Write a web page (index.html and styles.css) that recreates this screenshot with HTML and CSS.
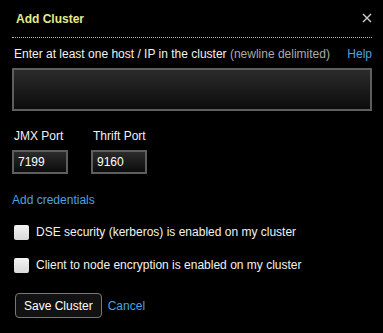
FILE: index.html
```html
<!DOCTYPE html>
<html>
<head>
    <meta charset="utf-8">
    <title>Add Cluster</title>
    <link rel="stylesheet" href="styles.css">
</head>
<body>
    <div class="dialog">
        <div class="header">
            <h1>Add Cluster</h1>
            <svg class="close" width="10" height="10" viewBox="0 0 10 10">
                <path d="M1 1L9 9M9 1L1 9" stroke="#cfcfcf" stroke-width="1.4" fill="none"/>
            </svg>
        </div>
        <div class="hosts-label">
            <span>Enter at least one host / IP in the cluster <span class="muted">(newline delimited)</span></span>
            <a href="#" class="link">Help</a>
        </div>
        <textarea class="hosts"></textarea>
        <div class="ports">
            <div class="port">
                <label>JMX Port</label>
                <input type="text" value="7199">
            </div>
            <div class="port">
                <label>Thrift Port</label>
                <input type="text" value="9160">
            </div>
        </div>
        <a href="#" class="link credentials">Add credentials</a>
        <label class="check"><span class="box"></span>DSE security (kerberos) is enabled on my cluster</label>
        <label class="check"><span class="box"></span>Client to node encryption is enabled on my cluster</label>
        <div class="actions">
            <button>Save Cluster</button>
            <a href="#" class="link">Cancel</a>
        </div>
    </div>
</body>
</html>
```

FILE: styles.css
```css
body {
    margin: 0;
    background-color: #000;
    color: #f2f2f2;
    font-family: "Liberation Sans", Arial, sans-serif;
    font-size: 12px;
}

.dialog {
    padding: 0 11px 0 12px;
}

.header {
    display: flex;
    justify-content: space-between;
    align-items: flex-start;
    height: 37px;
    border-bottom: 1px dotted #bbb;
}

.header h1 {
    margin: 12px 0 0 4px;
    font-size: 12px;
    color: #e4ec8a;
}

.close {
    margin: 13px 0 0 0;
}

.link {
    color: #4ba3e0;
    text-decoration: none;
}

.muted {
    color: #aaa;
}

.hosts-label {
    display: flex;
    justify-content: space-between;
    margin: 9px 0 0 2px;
    line-height: 15px;
}

.hosts {
    display: block;
    box-sizing: border-box;
    width: 100%;
    height: 43px;
    margin-top: 6px;
    background: linear-gradient(#2b2b2b, #0c0c0c);
    border: 2px solid #5e5e5e;
    resize: none;
}

.ports {
    display: flex;
    gap: 23px;
    margin-top: 18px;
}

.port label {
    display: block;
    margin-left: 2px;
    line-height: 15px;
}

.port input {
    box-sizing: border-box;
    width: 56px;
    height: 24px;
    margin-top: 6px;
    padding: 0 4px;
    background: linear-gradient(#2b2b2b, #0c0c0c);
    border: 2px solid #5e5e5e;
    color: #fff;
    font-family: inherit;
    font-size: 12px;
}

.credentials {
    display: block;
    margin-top: 19px;
    line-height: 15px;
}

.check {
    display: flex;
    align-items: center;
    margin: 17px 0 0 2px;
    line-height: 15px;
}

.check + .check {
    margin-top: 18px;
}

.box {
    width: 15px;
    height: 15px;
    margin-right: 7px;
    background: linear-gradient(#f4f4f4, #dadada);
    border-radius: 2px;
}

.actions {
    display: flex;
    align-items: center;
    gap: 6px;
    margin: 20px 0 0 3px;
}

.actions button {
    height: 25px;
    padding: 0 8px;
    background: #121212;
    color: #fff;
    border: 1px solid #777;
    border-radius: 4px;
    font-family: inherit;
    font-size: 12px;
}
```
